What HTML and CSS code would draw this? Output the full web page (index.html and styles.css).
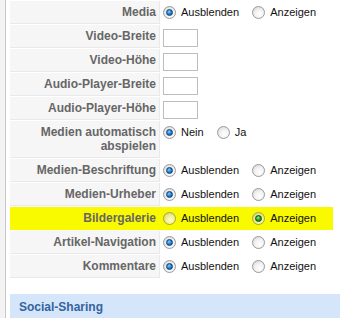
FILE: index.html
```html
<!DOCTYPE html>
<html lang="de">
<head>
    <meta charset="UTF-8">
    <meta name="viewport" content="width=device-width, initial-scale=1.0">
    <title>Beitragsoptionen</title>
    <link rel="stylesheet" href="styles.css">
</head>
<body>

    <div class="pane">
        <div class="paramlist">
            <div class="param-row">
                <div class="key">Media</div>
                <div class="value">
                    <span class="option"><span class="radio checked"></span>Ausblenden</span>
                    <span class="option"><span class="radio"></span>Anzeigen</span>
                </div>
            </div>
            <div class="param-row">
                <div class="key">Video-Breite</div>
                <div class="value"><span class="text-input"></span></div>
            </div>
            <div class="param-row">
                <div class="key">Video-Höhe</div>
                <div class="value"><span class="text-input"></span></div>
            </div>
            <div class="param-row">
                <div class="key">Audio-Player-Breite</div>
                <div class="value"><span class="text-input"></span></div>
            </div>
            <div class="param-row">
                <div class="key">Audio-Player-Höhe</div>
                <div class="value"><span class="text-input"></span></div>
            </div>
            <div class="param-row">
                <div class="key">Medien automatisch<br>abspielen</div>
                <div class="value">
                    <span class="option"><span class="radio checked"></span>Nein</span>
                    <span class="option"><span class="radio"></span>Ja</span>
                </div>
            </div>
            <div class="param-row">
                <div class="key">Medien-Beschriftung</div>
                <div class="value">
                    <span class="option"><span class="radio checked"></span>Ausblenden</span>
                    <span class="option"><span class="radio"></span>Anzeigen</span>
                </div>
            </div>
            <div class="param-row">
                <div class="key">Medien-Urheber</div>
                <div class="value">
                    <span class="option"><span class="radio checked"></span>Ausblenden</span>
                    <span class="option"><span class="radio"></span>Anzeigen</span>
                </div>
            </div>
            <div class="param-row highlight">
                <div class="key">Bildergalerie</div>
                <div class="value">
                    <span class="option"><span class="radio"></span>Ausblenden</span>
                    <span class="option"><span class="radio checked"></span>Anzeigen</span>
                </div>
            </div>
            <div class="param-row">
                <div class="key">Artikel-Navigation</div>
                <div class="value">
                    <span class="option"><span class="radio checked"></span>Ausblenden</span>
                    <span class="option"><span class="radio"></span>Anzeigen</span>
                </div>
            </div>
            <div class="param-row">
                <div class="key">Kommentare</div>
                <div class="value">
                    <span class="option"><span class="radio checked"></span>Ausblenden</span>
                    <span class="option"><span class="radio"></span>Anzeigen</span>
                </div>
            </div>
        </div>

        <div class="slider-title">Social-Sharing</div>
    </div>

</body>
</html>
```

FILE: styles.css
```css
html, body {
    margin: 0;
    height: 100%;
}

body {
    font-family: "Liberation Sans", Arial, sans-serif;
    font-size: 11px;
    color: #111;
    background-color: #f3f3f3;
    padding-left: 5px;
    overflow: hidden;
}

.pane {
    min-height: 100%;
    background-color: #ffffff;
    border-left: 1px solid #c9c9c9;
    padding-left: 4px;
}

.paramlist {
    padding: 1px 7px 15px 0;
}

.param-row {
    display: flex;
    margin-bottom: 1px;
}

.key {
    width: 150px;
    box-sizing: border-box;
    flex-shrink: 0;
    padding: 4px 3px 4px 5px;
    font-size: 12px;
    line-height: 14px;
    text-align: right;
    font-weight: bold;
    color: #666;
    background-color: #f6f6f6;
    border-bottom: 1px solid #e9e9e9;
    border-right: 1px solid #e9e9e9;
}

.value {
    flex: 1;
    margin-left: 1px;
    padding: 4px 2px 0;
    line-height: 14px;
}

/* Hervorgehobene Zeile (gelb) */
.highlight {
    background-color: #f9f900;
}

.highlight .key {
    background-color: #f9f900;
    border-color: #f9f900;
}

.option {
    display: inline-flex;
    align-items: center;
    height: 14px;
    margin-right: 10px;
}

.radio {
    display: inline-block;
    width: 13px;
    height: 13px;
    box-sizing: border-box;
    margin-right: 5px;
    border-radius: 50%;
    border: 1px solid #9a9a9a;
    background: radial-gradient(circle at 60% 65%, #ffffff 0%, #f2f2f2 45%, #cfcfcf 100%);
    position: relative;
}

.radio.checked::after {
    content: "";
    position: absolute;
    left: 2px;
    top: 2px;
    width: 7px;
    height: 7px;
    box-sizing: border-box;
    border-radius: 50%;
    border: 1px solid #0c3f78;
    background: radial-gradient(circle at 40% 35%, #8fd0ff 0%, #2a86d8 45%, #0b4f9a 100%);
}

.highlight .radio {
    border-color: #a8a83a;
    background: radial-gradient(circle at 60% 65%, #ffffc8 0%, #eeee90 50%, #c8c860 100%);
}

.highlight .radio.checked::after {
    border-color: #0c4a0c;
    background: radial-gradient(circle at 40% 35%, #9ef09e 0%, #2aa82a 45%, #0d6a0d 100%);
}

.text-input {
    display: block;
    width: 35px;
    height: 18px;
    box-sizing: border-box;
    border: 1px solid #bdbdbd;
    background-color: #ffffff;
}

.slider-title {
    background-color: #d6e6fa;
    padding: 6px 9px 8px;
    line-height: 14px;
    font-size: 12px;
    font-weight: bold;
    color: #33639f;
}
```
